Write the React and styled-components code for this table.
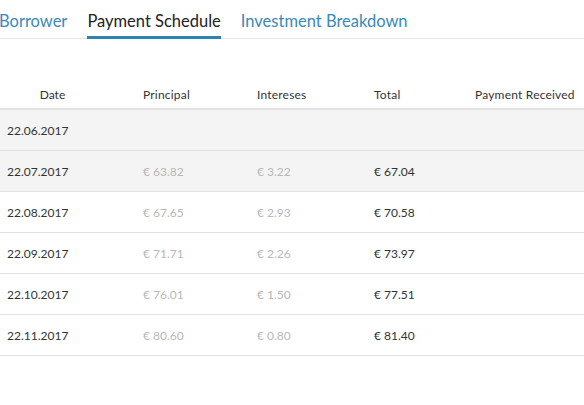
import React from "react";
import styled, { createGlobalStyle } from "styled-components";

const GlobalStyle = createGlobalStyle`
  html, body {
    margin: 0;
    padding: 0;
    background: #fff;
    font-family: Lato, "Open Sans", sans-serif;
  }
`;

const tabs = ["Borrower", "Payment Schedule", "Investment Breakdown"];

const rows = [
  { date: "22.06.2017", principal: "", interest: "", total: "", shaded: true },
  { date: "22.07.2017", principal: "€ 63.82", interest: "€ 3.22", total: "€ 67.04", shaded: true },
  { date: "22.08.2017", principal: "€ 67.65", interest: "€ 2.93", total: "€ 70.58" },
  { date: "22.09.2017", principal: "€ 71.71", interest: "€ 2.26", total: "€ 73.97" },
  { date: "22.10.2017", principal: "€ 76.01", interest: "€ 1.50", total: "€ 77.51" },
  { date: "22.11.2017", principal: "€ 80.60", interest: "€ 0.80", total: "€ 81.40" },
];

const App = () => {
  return (
    <Page>
      <GlobalStyle />
      <TabBar>
        {tabs.map((t, i) => (
          <Tab key={t} $active={i === 1}>
            {t}
          </Tab>
        ))}
      </TabBar>
      <Table>
        <HeaderRow>
          <DateHead>Date</DateHead>
          <HeadCell>Principal</HeadCell>
          <HeadCell>Intereses</HeadCell>
          <HeadCell>Total</HeadCell>
          <HeadCell>Payment Received</HeadCell>
        </HeaderRow>
        {rows.map((r) => (
          <Row key={r.date} $shaded={r.shaded}>
            <DateCell>{r.date}</DateCell>
            <Cell $muted>{r.principal}</Cell>
            <Cell $muted>{r.interest}</Cell>
            <Cell>{r.total}</Cell>
            <Cell />
          </Row>
        ))}
      </Table>
    </Page>
  );
};

const Page = styled.div`
  width: 584px;
  overflow: hidden;
`;

const TabBar = styled.div`
  display: flex;
  gap: 20px;
  margin-left: -1px;
  padding-top: 11px;
  border-bottom: 1px solid #e4e4e4;
`;

const Tab = styled.div`
  font-size: 16.5px;
  line-height: 20px;
  padding-bottom: 5px;
  margin-bottom: -1px;
  color: ${(p) => (p.$active ? "#222" : "#3a89b8")};
  border-bottom: 3px solid ${(p) => (p.$active ? "#2a84ae" : "transparent")};
  white-space: nowrap;
`;

const Table = styled.div`
  margin-top: 41px;
`;

const grid = `
  display: grid;
  grid-template-columns: 143px 114px 117px 101px 1fr;
  align-items: center;
`;

const HeaderRow = styled.div`
  ${grid}
  height: 28px;
  border-bottom: 2px solid #e2e2e2;
  font-size: 12px;
  color: #333;
`;

const HeadCell = styled.div`
  white-space: nowrap;
  letter-spacing: 0.2px;
`;

const DateHead = styled.div`
  width: 105px;
  text-align: center;
`;

const Row = styled.div`
  ${grid}
  height: 40px;
  border-bottom: 1px solid #e2e2e2;
  background: ${(p) => (p.$shaded ? "#f4f4f4" : "#fff")};
  font-size: 12px;
`;

const DateCell = styled.div`
  padding-left: 7px;
  color: #333;
`;

const Cell = styled.div`
  color: ${(p) => (p.$muted ? "#b8b8b8" : "#333")};
`;

export default App;
